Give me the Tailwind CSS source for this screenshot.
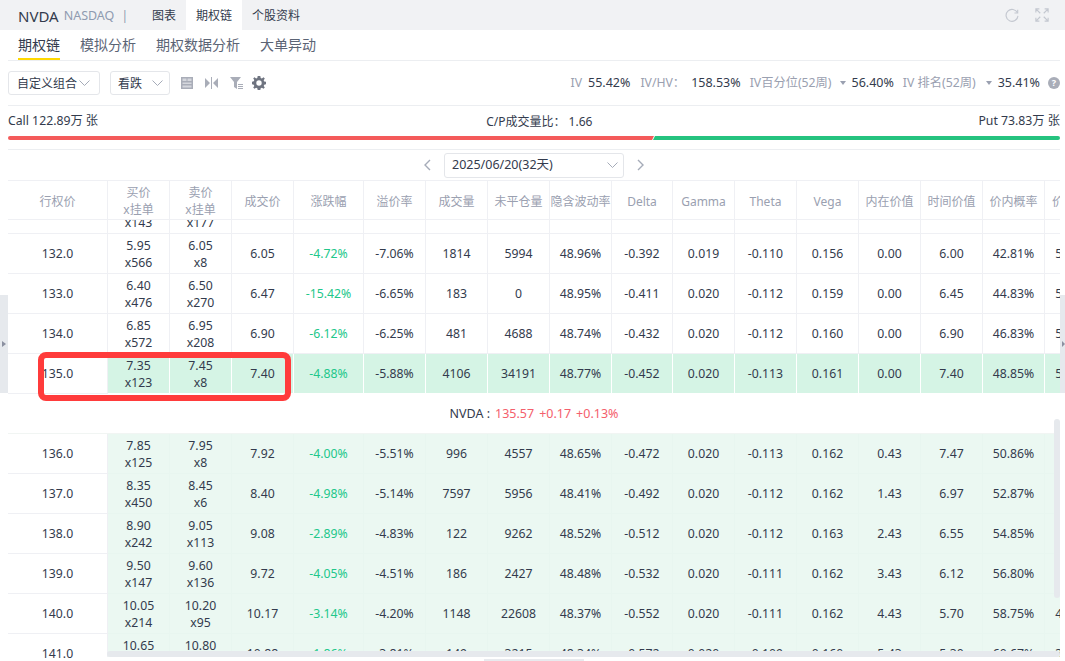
<!DOCTYPE html>
<html lang="zh">
<head>
  <meta charset="UTF-8" />
  <title>NVDA 期权链</title>
  <script src="https://cdn.jsdelivr.net/npm/@tailwindcss/browser@4"></script>
</head>
<body class="bg-white text-[#333b4d] overflow-hidden font-['Noto_Sans','Noto_Sans_CJK_SC',sans-serif]">
  <div class="relative w-[1065px] h-[661px] overflow-hidden">

    <!-- top tabs -->
    <div class="h-[30px] bg-[#f1f2f4] flex items-center pl-[18px] pr-[16px] text-[12px]">
      <span class="pt-[2px] text-[15px] text-[#333b4d]">NVDA</span>
      <span class="pt-[2px] ml-[5px] text-[12.5px] text-[#8f9bb0]">NASDAQ</span>
      <span class="pt-[2px] ml-[7px] text-[#8f9bb0]">|</span>
      <span class="pt-[2px] ml-[24px]">图表</span>
      <span class="pt-[2px] ml-[10px] bg-white h-full w-[56px] flex items-center justify-center">期权链</span>
      <span class="pt-[2px] ml-[10px]">个股资料</span>
      <div class="ml-auto flex items-center gap-[16px] text-[#c4c8d0]">
        <svg width="14" height="14" viewBox="0 0 16 16" fill="none" stroke="currentColor" stroke-width="1.300"><path d="M14.200 5.500A6.800 6.800 0 1 0 14.800 9"/><path d="M14.500 2v3.700H10.800"/></svg>
        <svg width="14" height="14" viewBox="0 0 16 16" fill="none" stroke="currentColor" stroke-width="1.300"><path d="M1 5V1h4M1 1l5 5M11 1h4v4M15 1l-5 5M1 11v4h4M1 15l5-5M15 11v4h-4M15 15l-5-5"/></svg>
      </div>
    </div>

    <!-- sub tabs -->
    <div class="mx-[8px] w-[1052px] h-[31px] border-b border-[#eceef1] flex pl-[10px] gap-[20px] text-[14px] text-[#5b6475]">
      <span class="h-[30px] leading-[30px] border-b-2 border-[#ffd800] text-[#333b4d]">期权链</span>
      <span class="leading-[30px]">模拟分析</span>
      <span class="leading-[30px]">期权数据分析</span>
      <span class="leading-[30px]">大单异动</span>
    </div>

    <!-- filters and IV stats -->
    <div class="mx-[8px] w-[1052px] h-[45px] border-b border-[#eceef1] flex items-center text-[12px]">
      <div class="w-[92px] h-[24px] border border-[#e4e6ea] rounded-[3px] flex items-center justify-between pl-[8px] pr-[9px]">
        <span class="pt-[2px]">自定义组合</span>
        <svg width="11" height="6" viewBox="0 0 11 6" fill="none" stroke="#a5abb8"><path d="M.5.5l5 5 5-5"/></svg>
      </div>
      <div class="ml-[10px] w-[60px] h-[24px] border border-[#e4e6ea] rounded-[3px] flex items-center justify-between pl-[7px] pr-[6px]">
        <span class="pt-[2px]">看跌</span>
        <svg width="11" height="6" viewBox="0 0 11 6" fill="none" stroke="#a5abb8"><path d="M.5.5l5 5 5-5"/></svg>
      </div>
      <div class="ml-[11px] flex items-center gap-[12px]">
        <svg width="12" height="12" viewBox="0 0 12 12"><path fill="#a9adb8" d="M0 0h12v12H0z"/><path fill="#d5d7dd" d="M1.500 1.500h4v2.500h-4zM6.500 1.500h4v2.500h-4zM1.500 5.500h9V7h-9zM1.500 8.500h9v2h-9z"/></svg>
        <svg width="13" height="12" viewBox="0 0 13 12" fill="#a9adb8"><path d="M0 1l5 5-5 5zM13 1L8 6l5 5z"/><path d="M6 0h1v12H6z"/></svg>
        <svg width="13" height="12" viewBox="0 0 13 12" fill="#a9adb8"><path d="M0 0h11L7 5v7L4 10V5z"/><path d="M8 7h5v1H8zM8 9h5v1H8zM8 11h5v1H8z"/></svg>
        <svg class="-ml-[3px]" width="14" height="14" viewBox="0 0 14 14" fill="#6f7480"><path fill-rule="evenodd" d="M5.700 0h2.600l.4 1.900 1.200.5L11.500 1.300l1.300 1.300-1.100 1.600.5 1.200 1.800.4v2.500l-1.800.4-.5 1.200 1.100 1.600-1.300 1.300-1.600-1.100-1.200.5-.4 1.800H5.700l-.4-1.800-1.200-.5-1.600 1.100-1.300-1.300 1.100-1.600-.5-1.200L0 8.200V5.700l1.800-.4.5-1.200L1.200 2.600 2.500 1.300l1.600 1.100 1.200-.5zM7 4.300a2.700 2.700 0 1 0 0 5.400 2.700 2.700 0 0 0 0-5.400z"/></svg>
      </div>
      <div class="ml-auto flex items-center text-[#333b4d] text-[12.5px]">
        <span class="text-[12.25px] text-[#9aa0b0]">IV</span><span class="ml-[6px]">55.42%</span>
        <span class="ml-[10px] text-[12.25px] text-[#9aa0b0]">IV/HV：</span><span class="ml-[6px]">158.53%</span>
        <span class="ml-[9px] text-[12.25px] text-[#9aa0b0]">IV百分位(52周)</span>
        <span class="ml-[8px] w-0 h-0 border-x-[3px] border-x-transparent border-t-[4px] border-t-[#9aa0b0]"></span>
        <span class="ml-[6px]">56.40%</span>
        <span class="ml-[9px] text-[12.25px] text-[#9aa0b0]">IV 排名(52周)</span>
        <span class="ml-[10px] w-0 h-0 border-x-[3px] border-x-transparent border-t-[4px] border-t-[#9aa0b0]"></span>
        <span class="ml-[6px]">35.41%</span>
        <span class="ml-[8px] w-[12px] h-[12px] rounded-full bg-[#a9adb8] text-white text-[9px] font-bold flex items-center justify-center">?</span>
      </div>
    </div>

    <!-- call / put ratio -->
    <div class="mx-[8px] w-[1052px] h-[44px] border-b border-[#eceef1] text-[12.25px]">
      <div class="h-[30px] pt-px flex items-center justify-between">
        <span>Call 122.89万 张</span>
        <span class="ml-[2px] text-[12px]">C/P成交量比： 1.66</span>
        <span>Put 73.83万 张</span>
      </div>
      <div class="flex h-[4px]">
        <div class="w-[646px] bg-[#f45a5a] rounded-l-full [clip-path:polygon(0_0,100%_0,99.700%_100%,0_100%)]"></div>
        <div class="-ml-px flex-1 bg-[#25c37f] rounded-r-full [clip-path:polygon(2px_0,100%_0,100%_100%,0_100%)]"></div>
      </div>
    </div>

    <!-- expiry picker -->
    <div class="w-[1065px] h-[30px] flex items-center justify-center gap-[13px] pl-[3px] text-[12.5px]">
      <svg width="7" height="12" viewBox="0 0 7 12" fill="none" stroke="#a5abb8" stroke-width="1.400"><path d="M6 1L1 6l5 5"/></svg>
      <div class="w-[180px] h-[25px] border border-[#e4e6ea] rounded-[3px] flex items-center justify-between pl-[7px] pr-[5px]">
        <span>2025/06/20(32天)</span>
        <svg width="11" height="6" viewBox="0 0 11 6" fill="none" stroke="#a5abb8"><path d="M.5.5l5 5 5-5"/></svg>
      </div>
      <svg width="7" height="12" viewBox="0 0 7 12" fill="none" stroke="#a5abb8" stroke-width="1.400"><path d="M1 1l5 5-5 5"/></svg>
    </div>

    <!-- option table -->
    <div class="mx-[8px] w-[1052px] h-[481px] overflow-hidden text-[12.25px]">
      <div id="head" class="flex h-[40px] border-y border-[#eff0f4] text-[12px] text-[#9aa0b0] text-center"></div>
      <div class="h-[14px] overflow-hidden"><div id="clip" class="flex h-[40px] -mt-[26px]"></div></div>
      <div id="upper"></div>
      <div class="h-[40px] pt-[2px] flex items-center justify-center gap-[5px] border-b border-[#f1f5f3] text-[12.5px]">
        <span class="text-[#333b4d]">NVDA :</span>
        <span class="text-[#f4606c]">135.57</span>
        <span class="text-[#f4606c]">+0.17</span>
        <span class="text-[#f4606c]">+0.13%</span>
      </div>
      <div id="lower"></div>
    </div>

    <!-- scrollbars and side handles -->
    <div class="absolute left-0 top-[295px] w-[8px] h-[98px] bg-[#e6e9ed] flex items-center">
      <span class="ml-[2px] w-0 h-0 border-y-[3px] border-y-transparent border-l-[4px] border-l-[#8b90a0]"></span>
    </div>
    <div class="absolute left-[1060px] top-[295px] w-[5px] h-[98px] bg-[#e6e9ed] flex items-center">
      <span class="ml-[2px] w-0 h-0 border-y-[3px] border-y-transparent border-l-[3px] border-l-[#8b90a0]"></span>
    </div>
    <div class="absolute left-[1054px] top-[419px] w-[6px] h-[179px] rounded-full bg-[#e6e9ed]"></div>
    <div class="absolute left-[107px] top-[651px] w-[953px] h-[6px] rounded-full bg-[#e6e9ed]"></div>
    <div class="absolute left-[107px] top-[657px] w-[953px] h-[4px] bg-white"></div>
    <div class="absolute left-[484px] top-[659px] w-[100px] h-[2px] bg-[#e8eaee]"></div>

    <!-- red annotation round the 135 row -->
    <div class="absolute left-[38px] top-[352px] w-[253px] h-[49px] border-[6px] border-[#ff3b3b] rounded-[8px]"></div>
  </div>

  <script>
    const widths = [100, 62, 62, 62, 70, 62, 62, 62, 62, 61, 62, 62, 62, 62, 62, 62, 62];
    const titles = ['行权价', '买价<br>x挂单', '卖价<br>x挂单', '成交价', '涨跌幅', '溢价率', '成交量', '未平仓量', '隐含波动率', 'Delta', 'Gamma', 'Theta', 'Vega', '内在价值', '时间价值', '价内概率', '价外概率'];

    const upper = [
      ['132.0', '5.95', 'x566', '6.05', 'x8', '6.05', '-4.72%', '-7.06%', '1814', '5994', '48.96%', '-0.392', '0.019', '-0.110', '0.156', '0.00', '6.00', '42.81%', '57.19%'],
      ['133.0', '6.40', 'x476', '6.50', 'x270', '6.47', '-15.42%', '-6.65%', '183', '0', '48.95%', '-0.411', '0.020', '-0.112', '0.159', '0.00', '6.45', '44.83%', '55.17%'],
      ['134.0', '6.85', 'x572', '6.95', 'x208', '6.90', '-6.12%', '-6.25%', '481', '4688', '48.74%', '-0.432', '0.020', '-0.112', '0.160', '0.00', '6.90', '46.83%', '53.17%'],
      ['135.0', '7.35', 'x123', '7.45', 'x8', '7.40', '-4.88%', '-5.88%', '4106', '34191', '48.77%', '-0.452', '0.020', '-0.113', '0.161', '0.00', '7.40', '48.85%', '51.15%'],
    ];
    const lower = [
      ['136.0', '7.85', 'x125', '7.95', 'x8', '7.92', '-4.00%', '-5.51%', '996', '4557', '48.65%', '-0.472', '0.020', '-0.113', '0.162', '0.43', '7.47', '50.86%', ''],
      ['137.0', '8.35', 'x450', '8.45', 'x6', '8.40', '-4.98%', '-5.14%', '7597', '5956', '48.41%', '-0.492', '0.020', '-0.112', '0.162', '1.43', '6.97', '52.87%', ''],
      ['138.0', '8.90', 'x242', '9.05', 'x113', '9.08', '-2.89%', '-4.83%', '122', '9262', '48.52%', '-0.512', '0.020', '-0.112', '0.163', '2.43', '6.55', '54.85%', ''],
      ['139.0', '9.50', 'x147', '9.60', 'x136', '9.72', '-4.05%', '-4.51%', '186', '2427', '48.48%', '-0.532', '0.020', '-0.111', '0.162', '3.43', '6.12', '56.80%', ''],
      ['140.0', '10.05', 'x214', '10.20', 'x95', '10.17', '-3.14%', '-4.20%', '1148', '22608', '48.37%', '-0.552', '0.020', '-0.111', '0.162', '4.43', '5.70', '58.75%', '41.25%'],
      ['141.0', '10.65', 'x86', '10.80', 'x70', '10.88', '-1.86%', '-3.81%', '149', '3215', '48.34%', '-0.572', '0.020', '-0.109', '0.160', '5.43', '5.30', '60.67%', '39.33%'],
    ];

    function cell(i, html, extra) {
      return `<div style="width:${widths[i]}px" class="shrink-0 flex flex-col items-center justify-center leading-[17px] ${i < 16 ? 'border-r' : ''} ${extra || ''}">${html}</div>`;
    }

    function rowCells(r, bg, line) {
      const b = `border-b ${bg} ${line}`;
      let html = cell(0, r[0], 'border-b border-[#eff0f4]');
      html += cell(1, `<span>${r[1]}</span><span>${r[2]}</span>`, b);
      html += cell(2, `<span>${r[3]}</span><span>${r[4]}</span>`, b);
      html += cell(3, r[5], b);
      html += cell(4, r[6], `${b} text-[#22c78a]`);
      r.slice(7).forEach((v, n) => { html += cell(n + 5, v, b); });
      return html;
    }

    document.getElementById('head').innerHTML = titles.map((t, i) => cell(i, t, 'pt-[2px] border-[#eff0f4] whitespace-nowrap')).join('');

    // row scrolled under the header, only its second line still shows
    const blank = ['', '', 'x143', '', 'x177', '', '', '', '', '', '', '', '', '', '', '', '', '', ''];
    blank[1] = blank[3] = '&nbsp;';
    document.getElementById('clip').innerHTML = rowCells(blank, 'bg-white', 'border-[#eff0f4]');

    document.getElementById('upper').innerHTML = upper.map((r, i) =>
      `<div class="flex h-[40px]">${i === 3 ? rowCells(r, 'bg-[#d5f4e5]', 'border-white') : rowCells(r, 'bg-white', 'border-[#eff0f4]')}</div>`
    ).join('');

    document.getElementById('lower').innerHTML = lower.map(r =>
      `<div class="flex h-[40px]">${rowCells(r, 'bg-[#ebf8f2]', 'border-[#e8f6f0]')}</div>`
    ).join('');
  </script>
</body>
</html>
